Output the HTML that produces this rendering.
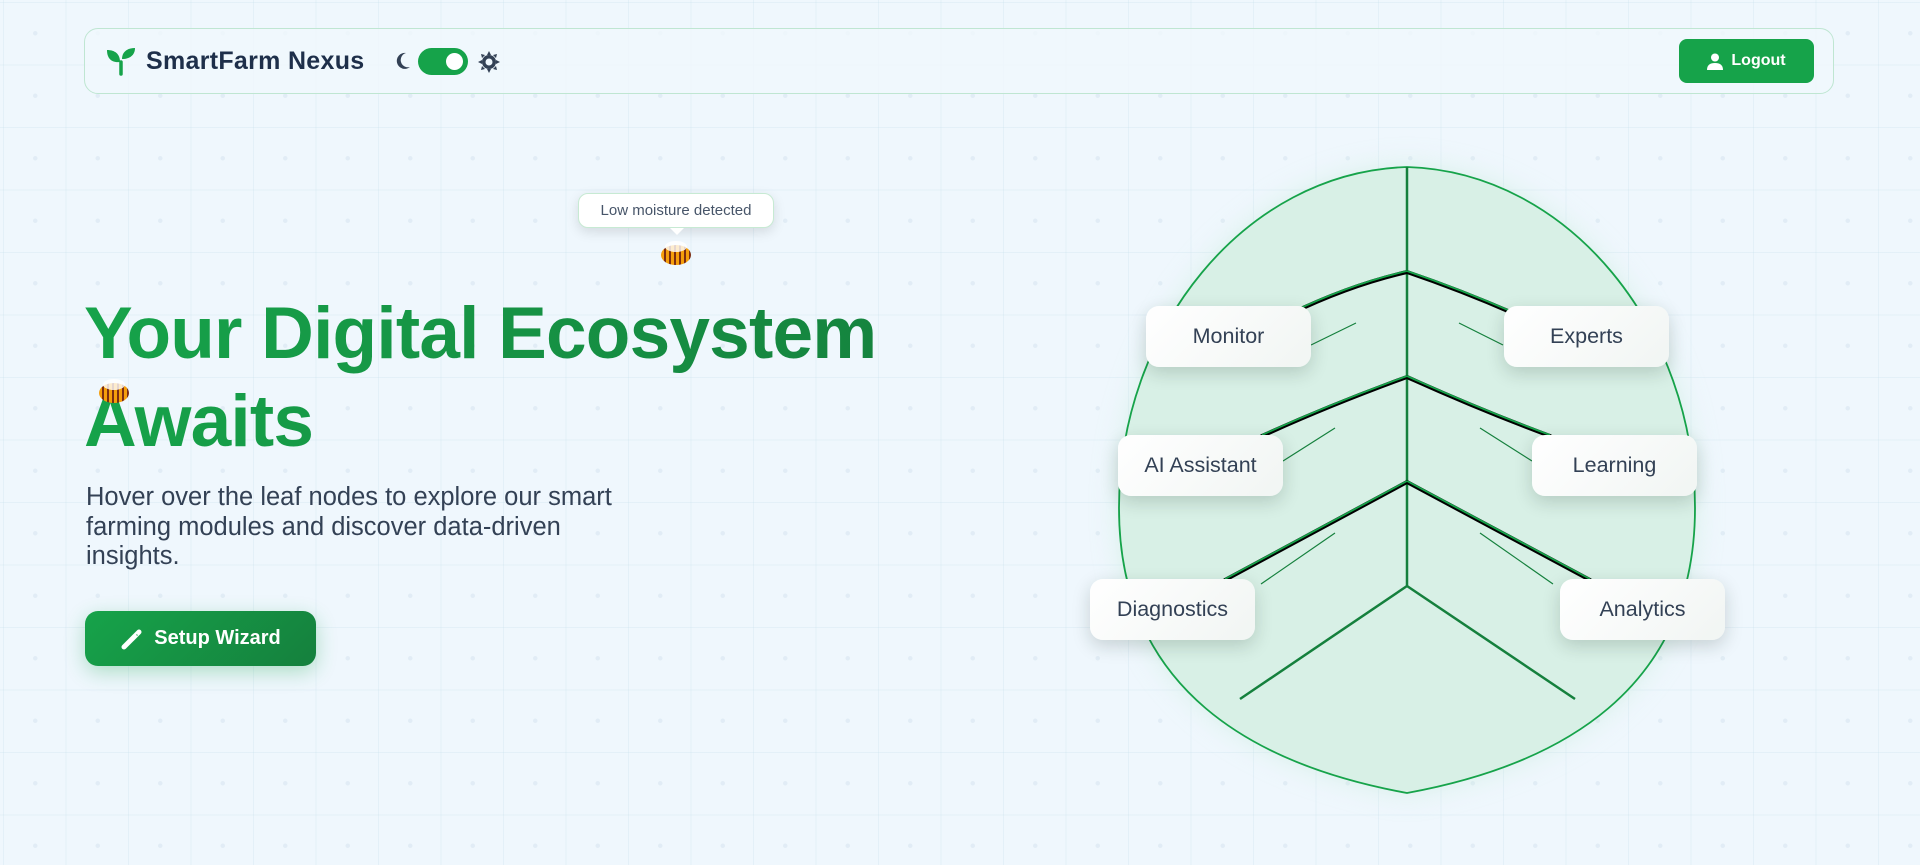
<!DOCTYPE html>
<html><head><meta charset="utf-8"><style>
*{margin:0;padding:0;box-sizing:border-box}
body{width:1920px;height:865px;overflow:hidden;font-family:"Liberation Sans",sans-serif;background-color:#eff7fd;
background-image:radial-gradient(circle at 50% 50%,rgba(190,210,225,.28) 0 2px,transparent 2.5px),linear-gradient(rgba(200,225,235,.3) 1px,transparent 1px),linear-gradient(90deg,rgba(200,225,235,.3) 1px,transparent 1px);
background-size:62.5px 62.5px;background-position:4px 2px,3px 2px,3px 2px;position:relative}
.hdr{position:absolute;left:84px;top:28px;width:1750px;height:66px;border:1.5px solid #bfe6d2;border-radius:14px;background:rgba(240,248,252,.8)}
.brand{position:absolute;left:61px;top:18px;font-size:25px;font-weight:bold;color:#1e2f4a;letter-spacing:.3px}
.tog{position:absolute;left:333px;top:19px;width:50px;height:27px;border-radius:14px;background:#16a34a}
.tog::after{content:"";position:absolute;right:5px;top:5px;width:17px;height:17px;border-radius:50%;background:#fff}
.logout{position:absolute;left:1594px;top:10px;width:135px;height:44px;border-radius:8px;background:#16a34a;color:#fff;font-weight:bold;font-size:16px;display:flex;align-items:center;justify-content:center;gap:8px}
h1{position:absolute;left:84px;top:290px;font-size:73px;line-height:88px;font-weight:bold;letter-spacing:-.8px;background:linear-gradient(90deg,#16a34a,#15803d);-webkit-background-clip:text;background-clip:text;color:transparent;width:900px}
p.sub{position:absolute;left:86px;top:483px;width:550px;font-size:25.5px;line-height:29.5px;color:#334155}
.wiz{position:absolute;left:85px;top:611px;width:231px;height:55px;border-radius:13px;background:linear-gradient(135deg,#16a34a,#15803d);color:#fff;font-weight:bold;font-size:20px;display:flex;align-items:center;justify-content:center;gap:10px;box-shadow:0 6px 20px rgba(22,163,74,.3)}
.tip{position:absolute;left:578px;top:193px;width:196px;height:35px;border-radius:10px;background:#fff;border:1px solid #c7ead3;font-size:15px;color:#475569;display:flex;align-items:center;justify-content:center;box-shadow:0 4px 12px rgba(0,0,0,.12)}
.tip::after{content:"";position:absolute;left:91px;bottom:-8px;border:7px solid transparent;border-top-color:#fff;border-bottom:0}
.bee{position:absolute;width:30px;height:20px;border-radius:50%;background:repeating-linear-gradient(90deg,#f59e0b 0 3px,#7c2d12 3px 5px);}
.bee::before{content:"";position:absolute;left:4px;top:-4px;width:22px;height:11px;border-radius:50%;background:rgba(255,255,255,.8)}
.node{position:absolute;width:165px;height:61px;border-radius:13px;background:linear-gradient(135deg,#fff,#f1f5f3);box-shadow:0 6px 18px rgba(15,40,30,.18);font-size:21.5px;color:#334155;display:flex;align-items:center;justify-content:center}
</style></head><body>
<div class="hdr">
<svg style="position:absolute;left:20px;top:17px" width="32" height="30" viewBox="0 0 32 30"><path d="M16 28V16" stroke="#16a34a" stroke-width="3.5" stroke-linecap="round"/><path d="M15 16C6 17 2 12 2 4c8 0 13 4 13 12z" fill="#16a34a"/><path d="M17 13c0-7 5-11 13-11 0 7-5 11-13 11z" fill="#16a34a"/></svg>
<div class="brand">SmartFarm Nexus</div>
<svg style="position:absolute;left:309px;top:22px" width="18" height="20" viewBox="0 0 18 20"><path d="M12 2A8 8 0 1 0 16 16 7 7 0 0 1 12 2z" fill="#334155"/></svg>
<div class="tog"></div>
<svg style="position:absolute;left:393px;top:22px" width="22" height="22" viewBox="0 0 22 22"><g fill="#334155"><circle cx="11" cy="11" r="7"/><path d="M11 0l2 4h-4zM11 22l-2-4h4zM0 11l4-2v4zM22 11l-4 2v-4zM3 3l4 1-3 3zM19 19l-4-1 3-3zM19 3l-1 4-3-3zM3 19l1-4 3 3z"/></g><circle cx="11" cy="11" r="3.5" fill="#eff7fd"/></svg>
<div class="logout"><svg width="16" height="17" viewBox="0 0 16 17"><circle cx="8" cy="4.5" r="4" fill="#fff"/><path d="M0 17c0-5 3-7 8-7s8 2 8 7z" fill="#fff"/></svg>Logout</div>
</div>
<div class="tip">Low moisture detected</div>
<div class="bee" style="left:661px;top:245px"></div>
<h1>Your Digital Ecosystem Awaits</h1>
<div class="bee" style="left:99px;top:383px"></div>
<p class="sub">Hover over the leaf nodes to explore our smart farming modules and discover data-driven insights.</p>
<div class="wiz"><svg width="24" height="24" viewBox="0 0 24 24"><path d="M4 20L19 5" stroke="#fff" stroke-width="5" stroke-linecap="round"/><path d="M16.5 7.5l1 1" stroke="#16a34a" stroke-width="1"/></svg>Setup Wizard</div>
<svg style="position:absolute;left:0;top:0" width="1920" height="865">
<defs><filter id="g" x="-20%" y="-20%" width="140%" height="140%"><feGaussianBlur stdDeviation="14"/></filter></defs>
<path d="M1407 167C1570 172 1695 330 1695 508C1695 690 1560 765 1407 793C1254 765 1119 690 1119 508C1119 330 1244 172 1407 167Z" fill="#bfe8d2" opacity=".5" filter="url(#g)"/>
<path d="M1407 167C1570 172 1695 330 1695 508C1695 690 1560 765 1407 793C1254 765 1119 690 1119 508C1119 330 1244 172 1407 167Z" fill="#d8f0e6" stroke="#16a34a" stroke-width="1.8"/>
<g stroke="#15803d" stroke-width="2.5" fill="none">
<path d="M1407 167V586"/>
<path d="M1407 586L1240 699M1407 586L1575 699"/>
</g>
<g stroke="#000" stroke-width="4" fill="none" stroke-linecap="round">
<path d="M1407 272Q1350 285 1290 314M1407 272Q1460 290 1515 314"/>
<path d="M1407 377Q1330 405 1262 436M1407 377Q1480 410 1550 436"/>
<path d="M1407 482L1225 580M1407 482L1590 580"/>
</g>
<g stroke="#16a34a" stroke-width="1.8" fill="none"><path d="M1407 272Q1350 285 1290 314M1407 272Q1460 290 1515 314M1407 377Q1330 405 1262 436M1407 377Q1480 410 1550 436M1407 482L1225 580M1407 482L1590 580" transform="translate(0,-1)"/></g>
<g stroke="#15803d" stroke-width="1.2">
<path d="M1311 345L1356 323M1459 323L1503 345M1283 461L1335 428M1480 428L1532 461M1261 584L1335 533M1480 533L1553 584"/>
</g>
</svg>
<div class="node" style="left:1146px;top:306px">Monitor</div>
<div class="node" style="left:1504px;top:306px">Experts</div>
<div class="node" style="left:1118px;top:435px">AI Assistant</div>
<div class="node" style="left:1532px;top:435px">Learning</div>
<div class="node" style="left:1090px;top:579px">Diagnostics</div>
<div class="node" style="left:1560px;top:579px">Analytics</div>
</body></html>
